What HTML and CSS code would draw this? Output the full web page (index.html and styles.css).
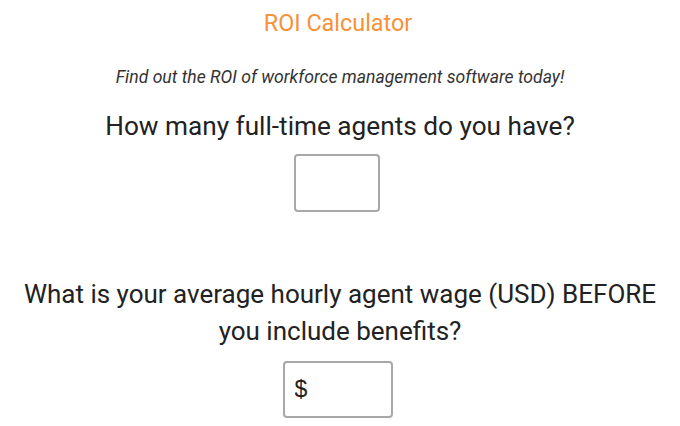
FILE: index.html
```html
<!DOCTYPE html>
<html lang="en">
<head>
<meta charset="utf-8">
<title>ROI Calculator</title>
<link rel="stylesheet" href="styles.css">
</head>
<body>
<main class="calc">
  <h1 class="calc-title">ROI Calculator</h1>
  <p class="calc-intro">Find out the ROI of workforce management software today!</p>
  <div class="field">
    <label class="field-label" for="agents">How many full-time agents do you have?</label>
    <input class="field-input field-input--agents" id="agents" type="text">
  </div>
  <div class="field field--wage">
    <label class="field-label" for="wage">What is your average hourly agent wage (USD) BEFORE you include benefits?</label>
    <input class="field-input field-input--wage" id="wage" type="text" value="$">
  </div>
</main>
</body>
</html>
```

FILE: styles.css
```css
html, body {
  margin: 0;
  padding: 0;
  background: #ffffff;
}

.calc {
  font-family: Roboto, "Liberation Sans", sans-serif;
  display: flex;
  flex-direction: column;
  align-items: center;
  text-align: center;
  padding: 9px 10px 0;
}

.calc-title {
  margin: 0 4px 0 0;
  font-size: 23.4px;
  font-weight: 400;
  line-height: 28px;
  color: #f7923a;
}

.calc-intro {
  margin: 29px 0 0;
  font-size: 17.6px;
  font-style: italic;
  line-height: 22px;
  color: #333333;
}

.field {
  display: flex;
  flex-direction: column;
  align-items: center;
}

.field-label {
  display: block;
  margin-top: 21px;
  font-size: 26.2px;
  line-height: 34px;
  color: #222222;
}

.field--wage .field-label {
  margin-top: 64px;
  max-width: 650px;
  font-size: 26px;
  line-height: 37px;
}

.field-input {
  box-sizing: border-box;
  height: 58px;
  margin: 11px 5px 0 0;
  border: 2px solid #a8a8a8;
  border-radius: 4px;
  background: #ffffff;
  font-family: "Liberation Sans", Arial, sans-serif;
  font-size: 23px;
  color: #222222;
  padding: 0 10px;
  outline: none;
}

.field-input--agents {
  width: 86px;
}

.field-input--wage {
  width: 110px;
  height: 57px;
}
```
